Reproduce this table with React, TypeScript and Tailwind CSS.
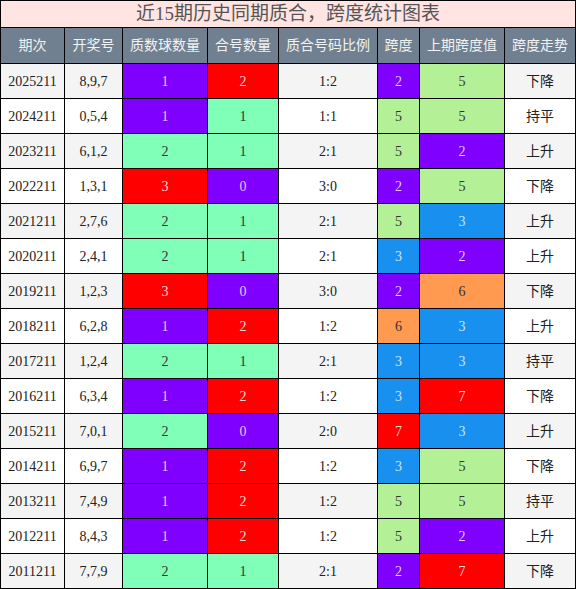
import React from "react";

const C: Record<string, string> = {
  P: "bg-[#8000ff] text-[#dccbff]",
  R: "bg-[#ff0000] text-[#ffd6d6]",
  A: "bg-[#80ffb8] text-[#333]",
  G: "bg-[#b4f096] text-[#333]",
  B: "bg-[#1890f0] text-[#c8e4ff]",
  O: "bg-[#ff9a50] text-[#333]",
};

const heads = ["期次", "开奖号", "质数球数量", "合号数量", "质合号码比例", "跨度", "上期跨度值", "跨度走势"];

// [期次, 开奖号, 质数, 色, 合号, 色, 比例, 跨度, 色, 上期, 色, 走势]
const rows: string[][] = [
  ["2025211", "8,9,7", "1", "P", "2", "R", "1:2", "2", "P", "5", "G", "下降"],
  ["2024211", "0,5,4", "1", "P", "1", "A", "1:1", "5", "G", "5", "G", "持平"],
  ["2023211", "6,1,2", "2", "A", "1", "A", "2:1", "5", "G", "2", "P", "上升"],
  ["2022211", "1,3,1", "3", "R", "0", "P", "3:0", "2", "P", "5", "G", "下降"],
  ["2021211", "2,7,6", "2", "A", "1", "A", "2:1", "5", "G", "3", "B", "上升"],
  ["2020211", "2,4,1", "2", "A", "1", "A", "2:1", "3", "B", "2", "P", "上升"],
  ["2019211", "1,2,3", "3", "R", "0", "P", "3:0", "2", "P", "6", "O", "下降"],
  ["2018211", "6,2,8", "1", "P", "2", "R", "1:2", "6", "O", "3", "B", "上升"],
  ["2017211", "1,2,4", "2", "A", "1", "A", "2:1", "3", "B", "3", "B", "持平"],
  ["2016211", "6,3,4", "1", "P", "2", "R", "1:2", "3", "B", "7", "R", "下降"],
  ["2015211", "7,0,1", "2", "A", "0", "P", "2:0", "7", "R", "3", "B", "上升"],
  ["2014211", "6,9,7", "1", "P", "2", "R", "1:2", "3", "B", "5", "G", "下降"],
  ["2013211", "7,4,9", "1", "P", "2", "R", "1:2", "5", "G", "5", "G", "持平"],
  ["2012211", "8,4,3", "1", "P", "2", "R", "1:2", "5", "G", "2", "P", "上升"],
  ["2011211", "7,7,9", "2", "A", "1", "A", "2:1", "2", "P", "7", "R", "下降"],
];

export default function App() {
  return (
    <div
      className="w-[576px] grid grid-cols-[63px_57px_84px_70px_98px_41px_84px_70px] gap-px p-px bg-black"
      style={{ fontFamily: '"Liberation Serif", "Noto Sans CJK SC", serif' }}
    >
      <div className="col-span-8 h-[26px] bg-[#ffe4e1] text-[#555] text-[19px] flex items-center justify-center">
        近15期历史同期质合，跨度统计图表
      </div>
      {heads.map((h) => (
        <div key={h} className="h-[35px] bg-[#708090] text-[#f2f2f2] text-[14px] flex items-center justify-center">
          {h}
        </div>
      ))}
      {rows.map((r, i) => {
        const bg = i % 2 === 0 ? "bg-[#f4f4f4]" : "bg-white";
        const cell = "h-[34px] text-[14px] flex items-center justify-center";
        return (
          <React.Fragment key={r[0]}>
            <div className={`${cell} ${bg} text-[#222]`}>{r[0]}</div>
            <div className={`${cell} ${bg} text-[#222]`}>{r[1]}</div>
            <div className={`${cell} ${C[r[3]]}`}>{r[2]}</div>
            <div className={`${cell} ${C[r[5]]}`}>{r[4]}</div>
            <div className={`${cell} ${bg} text-[#222]`}>{r[6]}</div>
            <div className={`${cell} ${C[r[8]]}`}>{r[7]}</div>
            <div className={`${cell} ${C[r[10]]}`}>{r[9]}</div>
            <div className={`${cell} ${bg} text-[#222]`}>{r[11]}</div>
          </React.Fragment>
        );
      })}
    </div>
  );
}
